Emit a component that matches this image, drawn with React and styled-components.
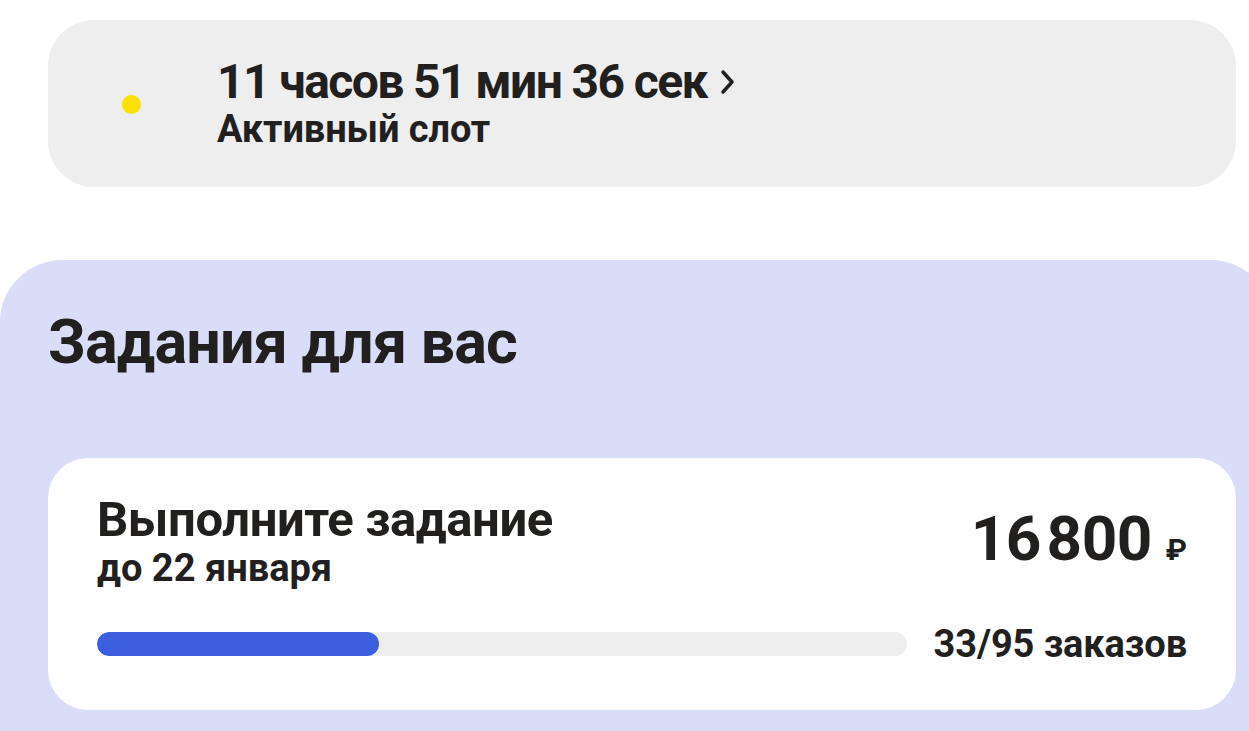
import React from "react";
import styled, { createGlobalStyle } from "styled-components";

const Global = createGlobalStyle`
  html, body { margin: 0; padding: 0; background: #ffffff; overflow: hidden; }
  body { font-family: Roboto, "Noto Sans", sans-serif; color: #21201f; }
  #root { width: 1249px; height: 731px; overflow: hidden; }
`;

const Page = styled.div`
  display: flex;
  flex-direction: column;
  padding-top: 20px;
`;

const SlotCard = styled.div`
  margin: 0 13px 0 48px;
  height: 167px;
  box-sizing: border-box;
  background: #eeeeee;
  border-radius: 46px;
  display: flex;
  align-items: center;
  padding-left: 74px;
  gap: 76px;
`;

const Dot = styled.span`
  width: 19px;
  height: 19px;
  border-radius: 50%;
  background: #fce000;
  flex: none;
  margin-top: 2px;
`;

const SlotText = styled.div`
  display: flex;
  flex-direction: column;
  margin-top: -2px;
`;

const SlotTime = styled.div`
  font-weight: 700;
  font-size: 48px;
  line-height: 52px;
  letter-spacing: -1.6px;
  display: flex;
  align-items: center;
  gap: 12px;
`;

const SlotLabel = styled.div`
  font-weight: 700;
  font-size: 38px;
  line-height: 42px;
  letter-spacing: -0.1px;
`;

const Panel = styled.section`
  margin-top: 73px;
  margin-right: -24px;
  background: #d9ddf7;
  border-radius: 62px 62px 0 0;
  padding: 42px 37px 40px 48px;
  display: flex;
  flex-direction: column;
  gap: 76px;
`;

const PanelTitle = styled.h2`
  margin: 0;
  font-weight: 700;
  font-size: 61px;
  line-height: 80px;
  letter-spacing: -0.8px;
`;

const TaskCard = styled.div`
  background: #ffffff;
  border-radius: 40px;
  padding: 34px 49px 46px 49px;
  display: flex;
  flex-direction: column;
  gap: 36px;
`;

const TaskTop = styled.div`
  display: flex;
  justify-content: space-between;
  align-items: flex-start;
`;

const TaskHead = styled.div`
  display: flex;
  flex-direction: column;
`;

const TaskTitle = styled.div`
  font-weight: 700;
  font-size: 49px;
  line-height: 56px;
  letter-spacing: -0.4px;
`;

const TaskDue = styled.div`
  font-weight: 700;
  font-size: 38px;
  line-height: 40px;
  letter-spacing: 0px;
`;

const Reward = styled.div`
  display: flex;
  align-items: baseline;
  gap: 14px;
  margin-top: 12px;
`;

const Amount = styled.span`
  font-weight: 700;
  font-size: 62px;
  line-height: 70px;
  letter-spacing: -0.5px;
`;

const Currency = styled.span`
  font-weight: 700;
  font-size: 30px;
`;

const ProgressRow = styled.div`
  display: flex;
  align-items: center;
  gap: 26px;
`;

const Track = styled.div`
  flex: 1;
  height: 24px;
  border-radius: 12px;
  background: #eeeeee;
  overflow: hidden;
`;

const Fill = styled.div`
  height: 100%;
  border-radius: 12px;
  background: #3c5fe0;
`;

const Count = styled.div`
  font-weight: 700;
  font-size: 38px;
  line-height: 40px;
  letter-spacing: -0.1px;
  white-space: nowrap;
`;

const Chevron = () => (
  <svg width="18" height="28" viewBox="0 0 18 28" fill="none">
    <path d="M4 4l9 10-9 10" stroke="#21201f" strokeWidth="3.5" strokeLinecap="round" strokeLinejoin="round" />
  </svg>
);

export default function App() {
  const done = 33;
  const total = 95;
  return (
    <>
      <Global />
      <Page>
        <SlotCard>
          <Dot />
          <SlotText>
            <SlotTime>
              11 часов 51 мин 36 сек <Chevron />
            </SlotTime>
            <SlotLabel>Активный слот</SlotLabel>
          </SlotText>
        </SlotCard>
        <Panel>
          <PanelTitle>Задания для вас</PanelTitle>
          <TaskCard>
            <TaskTop>
              <TaskHead>
                <TaskTitle>Выполните задание</TaskTitle>
                <TaskDue>до 22 января</TaskDue>
              </TaskHead>
              <Reward>
                <Amount>16{"\u200A"}800</Amount>
                <Currency>₽</Currency>
              </Reward>
            </TaskTop>
            <ProgressRow>
              <Track>
                <Fill style={{ width: `${(done / total) * 100}%` }} />
              </Track>
              <Count>
                {done}/{total} заказов
              </Count>
            </ProgressRow>
          </TaskCard>
        </Panel>
      </Page>
    </>
  );
}
